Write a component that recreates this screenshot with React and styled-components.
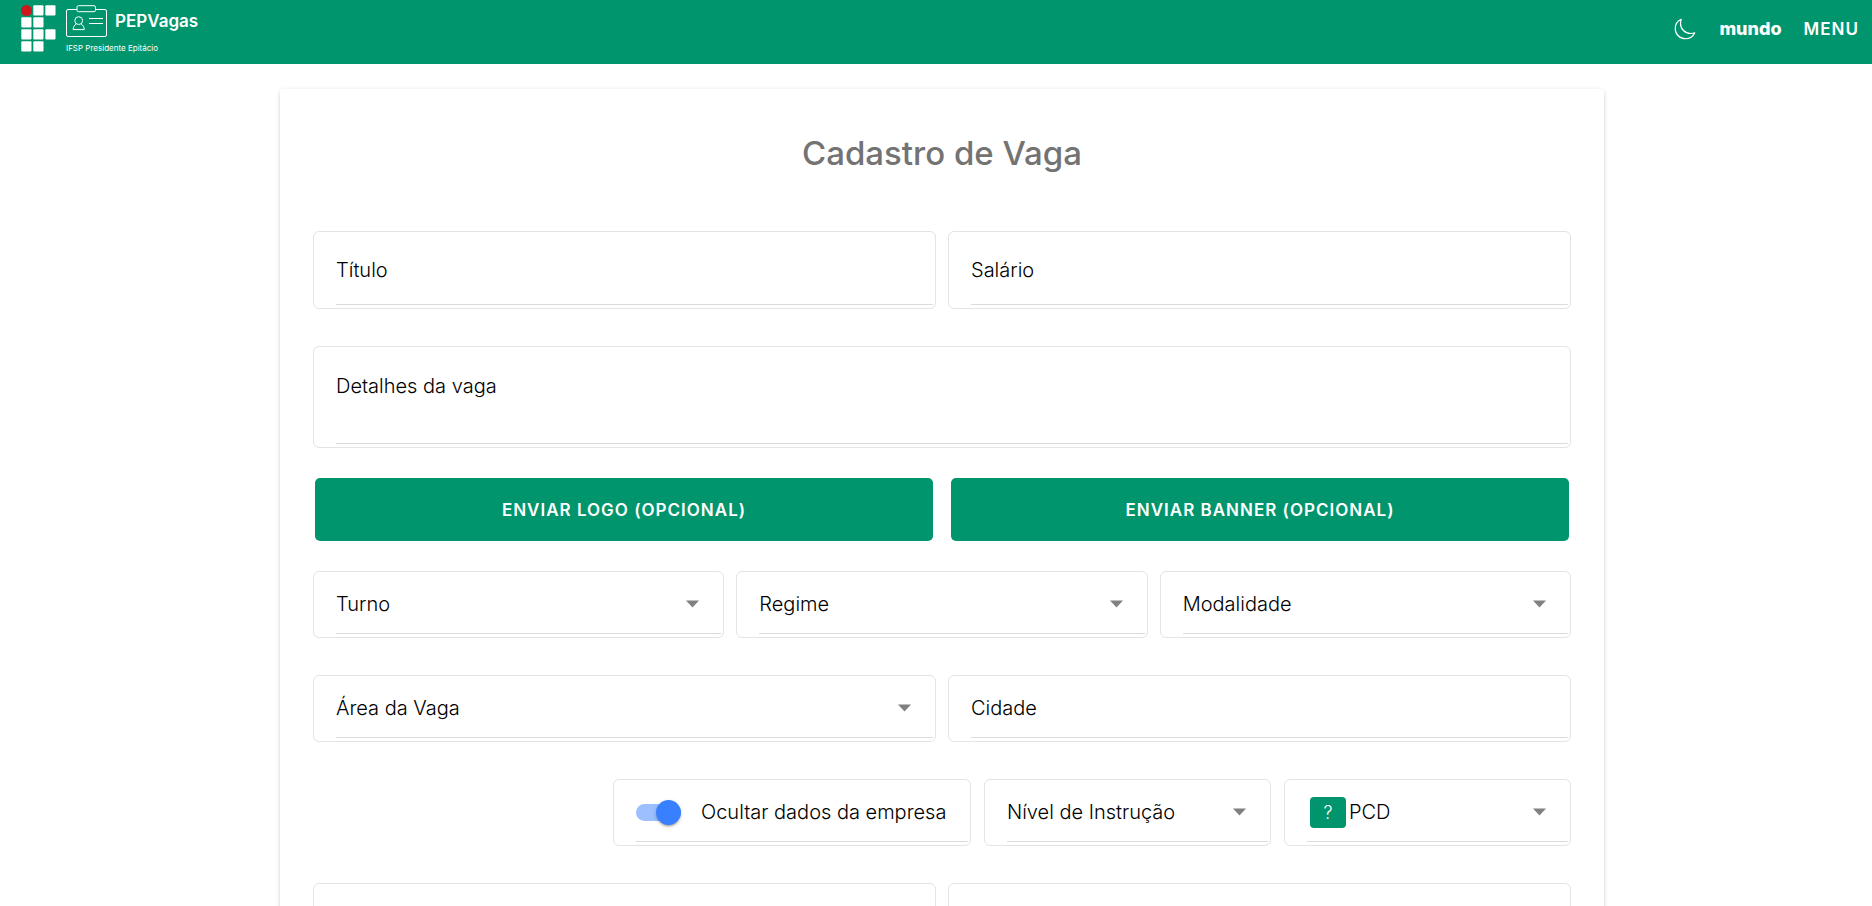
import React from "react";
import styled, { createGlobalStyle, css } from "styled-components";
import { IoMoonOutline } from "react-icons/io5";

const green = "#00956c";

const GlobalStyle = createGlobalStyle`
  *, *::before, *::after { box-sizing: border-box; }
  body {
    margin: 0;
    background: #fff;
    font-family: Inter, "Liberation Sans", sans-serif;
    color: #000;
  }
  button, input, select, textarea { font: inherit; color: inherit; }
`;

const Page = styled.div`
  display: flex;
  flex-direction: column;
  height: 100vh;
`;

const Header = styled.header`
  flex: none;
  display: flex;
  align-items: center;
  justify-content: space-between;
  height: 64px;
  padding: 0 13px 7px 21px;
  background: ${green};
  color: #fff;
`;

const Brand = styled.a`
  display: flex;
  gap: 10px;
  padding-top: 1px;
  color: inherit;
  text-decoration: none;
`;

const BrandText = styled.span`
  display: flex;
  flex-direction: column;
  gap: 6px;
`;

const BrandName = styled.span`
  display: flex;
  align-items: center;
  gap: 8px;
  font-size: 17px;
  font-weight: 600;
`;

const BrandCampus = styled.span`
  font-size: 8px;
  line-height: 10px;
`;

const Nav = styled.nav`
  display: flex;
  align-items: center;
  gap: 22px;
`;

const NavButton = styled.button`
  display: flex;
  align-items: center;
  padding: 0;
  border: 0;
  background: none;
  font-size: ${(p) => (p.$heavy ? "18px" : "17px")};
  line-height: 24px;
  font-weight: ${(p) => (p.$heavy ? 800 : 600)};
  letter-spacing: ${(p) => (p.$heavy ? "0" : "1px")};
  cursor: pointer;

  path {
    stroke-width: 26px;
  }
`;

const Main = styled.main`
  flex: 1;
  min-height: 0;
  overflow-y: auto;
  scrollbar-width: none;
  padding: 25px 268px 25px 280px;
`;

const Card = styled.form`
  padding: 44px 33px;
  border-radius: 4px;
  background: #fff;
  box-shadow: 0 3px 1px -2px rgba(0, 0, 0, 0.2), 0 2px 2px 0 rgba(0, 0, 0, 0.14),
    0 1px 5px 0 rgba(0, 0, 0, 0.12);
`;

const Title = styled.h1`
  margin: 0 0 58px;
  font-size: 33px;
  line-height: 40px;
  font-weight: 500;
  text-align: center;
  color: #737373;
`;

const Row = styled.div`
  display: flex;
  justify-content: flex-end;
  gap: ${(p) => p.$gap || "12px"};
  margin-bottom: ${(p) => (p.$tight ? "30px" : "37px")};
  padding: ${(p) => (p.$actions ? "0 2px" : "0")};
`;

const Field = styled.div`
  flex: ${(p) => p.$basis || "1 1 0"};
  display: flex;
  min-width: 0;
  min-height: ${(p) => (p.$tall ? "78px" : "67px")};
  padding: 3px 2px 3px 22px;
  border: 1px solid #e4e4e4;
  border-radius: 6px;
`;

const FieldLine = styled.div`
  flex: 1;
  display: flex;
  align-items: center;
  min-width: 0;
  border-bottom: 1px solid #dcdcdc;
  ${(p) =>
    p.$multiline &&
    css`
      align-items: flex-start;
      height: 94px;
      padding-top: 23px;
    `}
`;

const Label = styled.label`
  flex: none;
  font-size: 20px;
  line-height: 26px;
  font-weight: 300;
`;

const control = css`
  flex: 1;
  min-width: 0;
  border: 0;
  outline: 0;
  background: transparent;
  font-size: 20px;
  line-height: 26px;
  font-weight: 300;
`;

const Input = styled.input`
  ${control}
  padding: 0 16px;
`;

const TextArea = styled.textarea`
  ${control}
  height: 60px;
  padding: 0 16px;
  resize: none;
`;

const Select = styled.select`
  ${control}
  align-self: stretch;
  margin-right: 8px;
  appearance: none;
`;

const Caret = styled.svg`
  flex: none;
  width: 13px;
  height: 8px;
  margin-right: 22px;
  fill: #808080;
  pointer-events: none;
`;

const Switch = styled.input`
  appearance: none;
  flex: none;
  display: flex;
  align-items: center;
  justify-content: flex-start;
  width: 45px;
  height: 17px;
  margin: 0 20px 0 0;
  border-radius: 9px;
  background: #cfcfcf;
  cursor: pointer;

  &::before {
    content: "";
    flex: none;
    width: 25px;
    height: 25px;
    border-radius: 50%;
    background: #fff;
    box-shadow: 0 3px 1px -2px rgba(0, 0, 0, 0.2),
      0 2px 2px 0 rgba(0, 0, 0, 0.14), 0 1px 5px 0 rgba(0, 0, 0, 0.12);
  }

  &:checked {
    justify-content: flex-end;
    background: #9cbfff;
  }

  &:checked::before {
    background: #3880ff;
  }
`;

const HelpButton = styled.button`
  flex: none;
  width: 36px;
  height: 31px;
  margin: 0 3px;
  padding: 0;
  border: 0;
  border-radius: 4px;
  background: ${green};
  color: #fff;
  font-size: 18px;
  font-weight: 300;
  cursor: pointer;
`;

const UploadButton = styled.button`
  flex: 1 1 0;
  height: 63px;
  border: 0;
  border-radius: 5px;
  background: ${green};
  color: #fff;
  font-size: 17px;
  font-weight: 600;
  letter-spacing: 1px;
  cursor: pointer;
`;

function CampusLogo() {
  const squares = [
    [12, 0], [24, 0],
    [0, 12], [12, 12],
    [0, 24], [12, 24], [24, 24],
    [0, 36], [12, 36],
  ];
  return (
    <svg width="35" height="47" viewBox="0 0 35 47" aria-hidden="true">
      <circle cx="5.5" cy="5.5" r="5.5" fill="#cd191e" />
      {squares.map(([x, y]) => (
        <rect key={`${x}-${y}`} x={x + 0.3} y={y + 0.2} width="10.2" height="10.4" rx="1" fill="#fff" />
      ))}
    </svg>
  );
}

function BadgeIcon() {
  return (
    <svg width="41" height="32" viewBox="0 0 41 32" fill="none" stroke="#fff" strokeWidth="1" aria-hidden="true">
      <path d="M11 4.5H2Q.5 4.5 .5 6V30Q.5 31.5 2 31.5H39Q40.5 31.5 40.5 30V6Q40.5 4.5 39 4.5H30" />
      <rect x="11" y=".7" width="18.5" height="6" rx="1.5" />
      <path d="M23 13.5H37M23 18.5H37" />
      <circle cx="12.7" cy="15.6" r="3.9" />
      <path d="M10.3 19C8.3 20 7.3 22 7.1 24.6H18.3C18.1 22 17.1 20 15.1 19" />
    </svg>
  );
}

function TextField({ id, label, name, tall }) {
  return (
    <Field $tall={tall}>
      <FieldLine>
        {label && <Label htmlFor={id}>{label}</Label>}
        <Input id={id} type="text" aria-label={name} />
      </FieldLine>
    </Field>
  );
}

function SelectField({ id, label, basis, before }) {
  return (
    <Field $basis={basis}>
      <FieldLine>
        {before}
        <Label htmlFor={id}>{label}</Label>
        <Select id={id} defaultValue="">
          <option value="" />
        </Select>
        <Caret viewBox="0 0 13 8" aria-hidden="true">
          <path d="M0 .5H13L6.5 7.5Z" />
        </Caret>
      </FieldLine>
    </Field>
  );
}

export default function App() {
  return (
    <Page>
      <GlobalStyle />
      <Header>
        <Brand href="#">
          <CampusLogo />
          <BrandText>
            <BrandName>
              <BadgeIcon />
              PEPVagas
            </BrandName>
            <BrandCampus>IFSP Presidente Epitácio</BrandCampus>
          </BrandText>
        </Brand>
        <Nav>
          <NavButton type="button" aria-label="Alternar tema">
            <IoMoonOutline size={24} />
          </NavButton>
          <NavButton type="button" $heavy>mundo</NavButton>
          <NavButton type="button">MENU</NavButton>
        </Nav>
      </Header>
      <Main>
        <Card>
          <Title>Cadastro de Vaga</Title>
          <Row>
            <TextField id="titulo" label="Título" tall />
            <TextField id="salario" label="Salário" tall />
          </Row>
          <Row $tight>
            <Field>
              <FieldLine $multiline>
                <Label htmlFor="detalhes">Detalhes da vaga</Label>
                <TextArea id="detalhes" />
              </FieldLine>
            </Field>
          </Row>
          <Row $actions $tight $gap="18px">
            <UploadButton type="button">ENVIAR LOGO (OPCIONAL)</UploadButton>
            <UploadButton type="button">ENVIAR BANNER (OPCIONAL)</UploadButton>
          </Row>
          <Row>
            <SelectField id="turno" label="Turno" />
            <SelectField id="regime" label="Regime" />
            <SelectField id="modalidade" label="Modalidade" />
          </Row>
          <Row>
            <SelectField id="area" label="Área da Vaga" />
            <TextField id="cidade" label="Cidade" />
          </Row>
          <Row $gap="13px">
            <Field $basis="0 0 358px">
              <FieldLine>
                <Switch id="ocultar" type="checkbox" defaultChecked />
                <Label htmlFor="ocultar">Ocultar dados da empresa</Label>
              </FieldLine>
            </Field>
            <SelectField id="nivel" label="Nível de Instrução" basis="0 0 287px" />
            <SelectField
              id="pcd"
              label="PCD"
              basis="0 0 287px"
              before={<HelpButton type="button" aria-label="Ajuda sobre PCD">?</HelpButton>}
            />
          </Row>
          <Row>
            <TextField id="site" name="Site" />
            <TextField id="email" name="E-mail" />
          </Row>
        </Card>
      </Main>
    </Page>
  );
}
